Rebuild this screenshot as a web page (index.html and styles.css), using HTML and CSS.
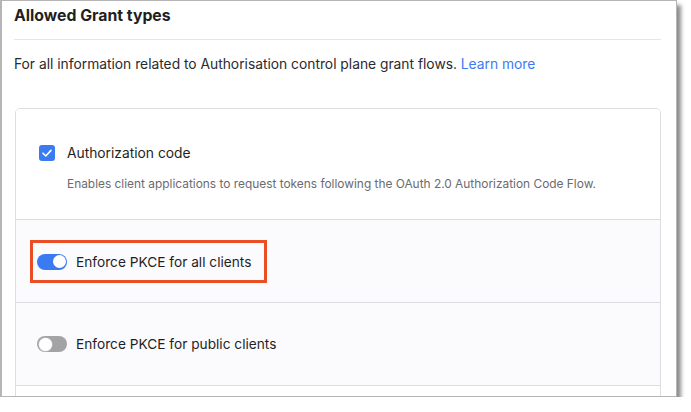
FILE: index.html
```html
<!DOCTYPE html>
<html lang="en">
<head>
    <meta charset="UTF-8">
    <meta name="viewport" content="width=device-width, initial-scale=1.0">
    <title>Allowed Grant types</title>
    <link rel="stylesheet" href="styles.css">
</head>

<body>
    <div class="frame">
        <h2 class="title">Allowed Grant types</h2>
        <p class="intro">For all information related to Authorisation control plane grant flows. <a href="#">Learn more</a></p>

        <div class="card">
            <div class="row row-white row-check">
                <label class="check-line">
                    <span class="checkbox">
                        <svg width="16" height="16" viewBox="0 0 16 16">
                            <path d="M4 8.2 L6.8 11 L12 5.4" fill="none" stroke="#fff" stroke-width="1.6" stroke-linecap="round" stroke-linejoin="round"/>
                        </svg>
                    </span>
                    <span class="check-label">Authorization code</span>
                </label>
                <p class="desc">Enables client applications to request tokens following the OAuth 2.0 Authorization Code Flow.</p>
            </div>

            <div class="row row-tint row-boxed">
                <span class="highlight">
                    <span class="toggle on"><span class="knob"></span></span>
                    <span class="toggle-label">Enforce PKCE for all clients</span>
                </span>
            </div>

            <div class="row row-tint row-plain">
                <span class="toggle off"><span class="knob"></span></span>
                <span class="toggle-label">Enforce PKCE for public clients</span>
            </div>

            <div class="row row-white row-rest"></div>
        </div>
    </div>
</body>

</html>
```

FILE: styles.css
```css
body {
    margin: 0;
    background: #fff;
    font-family: Inter, "Noto Sans", sans-serif;
    color: #1f1f23;
}

.frame {
    box-sizing: border-box;
    width: 677px;
    height: 397px;
    padding: 0 15px 0 12px;
    border: 1px solid #b5b5b5;
    border-left-width: 2px;
    background: #fff;
    box-shadow: 4px 5px 4px rgba(0, 0, 0, 0.45);
    overflow: hidden;
}

.title {
    margin: 0;
    height: 39px;
    padding-top: 5px;
    box-sizing: border-box;
    font-size: 15.8px;
    font-weight: 700;
    line-height: 20px;
    border-bottom: 1px solid #e6e6e8;
}

.intro {
    margin: 0;
    padding-top: 15px;
    height: 53px;
    font-size: 13.8px;
    line-height: 18px;
    color: #2a2a2e;
}

.intro a {
    color: #3b7bf2;
    text-decoration: none;
}

.card {
    margin-left: 1px;
    border: 1px solid #dedee2;
    border-radius: 5px 5px 0 0;
    overflow: hidden;
}

.row {
    box-sizing: border-box;
    border-top: 1px solid #dcdce0;
}

.row:first-child {
    border-top: none;
}

.row-white {
    background: #fff;
}

.row-tint {
    background: #fbfbfe;
}

.row-check {
    height: 110px;
    padding: 35px 0 0 23px;
}

.check-line {
    display: flex;
    align-items: center;
    gap: 12px;
}

.checkbox {
    width: 16px;
    height: 16px;
    border-radius: 3px;
    background: #3b7bf2;
    display: flex;
}

.check-label {
    font-size: 13.8px;
    line-height: 18px;
}

.desc {
    margin: 14px 0 0 28px;
    font-size: 11.9px;
    line-height: 16px;
    color: #6b6b70;
}

.row-boxed,
.row-plain {
    height: 83px;
    display: flex;
    align-items: center;
}

.row-boxed {
    padding-left: 14px;
}

.row-plain {
    padding-left: 21px;
    gap: 9px;
}

.highlight {
    display: inline-flex;
    align-items: center;
    gap: 9px;
    padding: 10px 13px 9px 4px;
    border: 3px solid #e94e24;
}

.toggle {
    width: 30px;
    height: 16px;
    border-radius: 8px;
    display: flex;
    align-items: center;
    box-sizing: border-box;
    padding: 0 1.5px;
}

.toggle.on {
    background: #3b7bf2;
    justify-content: flex-end;
}

.toggle.off {
    background: #a3a3a6;
}

.knob {
    width: 13px;
    height: 13px;
    border-radius: 50%;
    background: #fff;
}

.toggle.off .knob {
    box-shadow: 0 0 0 0.5px #d0d0d4;
}

.toggle-label {
    font-size: 13.7px;
    line-height: 18px;
}

.row-rest {
    height: 20px;
}
```
